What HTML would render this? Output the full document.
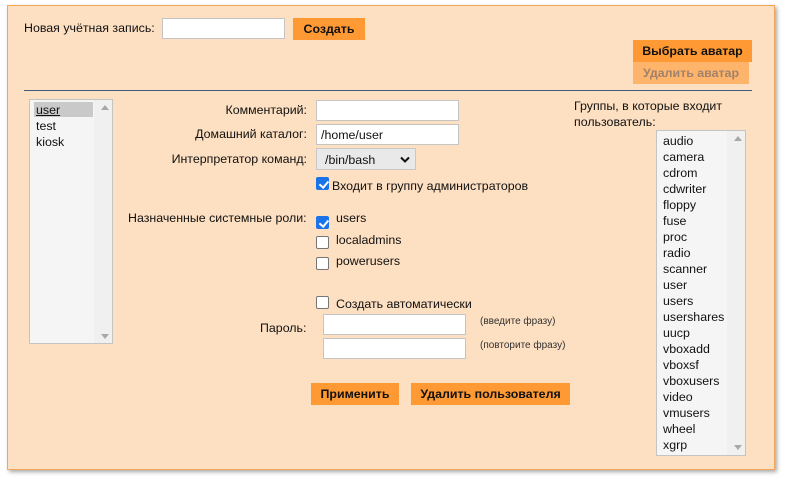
<!DOCTYPE html>
<html><head><meta charset="utf-8"><style>
*{margin:0;padding:0;box-sizing:border-box}
body{width:787px;height:484px;background:#fff;font-family:"Liberation Sans",sans-serif;font-size:12.4px;color:#111;position:relative;overflow:hidden}
.a{position:absolute;white-space:nowrap}
#panel{position:absolute;left:7px;top:5px;width:768px;height:465px;background:#fddfc1;border:1px solid #f3a658;box-shadow:2px 2px 4px rgba(0,0,0,.35)}
.in{position:absolute;background:#fff;border:1px solid #c4c4c4}
.btn{position:absolute;background:#ff9933;font-weight:bold;font-size:12.4px;text-align:center;color:#111}
.cb{position:absolute;width:13px;height:13px;border:1px solid #767676;border-radius:2px;background:#fff}
.cb.on{background:#1a73e8;border-color:#1a73e8}
.cb.on:after{content:"";position:absolute;left:3.5px;top:0.5px;width:3.5px;height:7px;border:solid #fff;border-width:0 2px 2px 0;transform:rotate(40deg)}
.lst{position:absolute;background:#f5f5f5;border:1px solid #c4c4c4}
.lst .sb{position:absolute;right:0;top:0;bottom:0;width:18px;background:#f0f0f0}
.up{position:absolute;width:0;height:0;border-left:4px solid transparent;border-right:4px solid transparent;border-bottom:5px solid #a8a8a8}
.dn{position:absolute;width:0;height:0;border-left:4px solid transparent;border-right:4px solid transparent;border-top:5px solid #a8a8a8}
.r{text-align:right}
</style></head><body>
<div id="panel"></div>
<div class="a" style="left:24px;top:21px">Новая учётная запись:</div>
<div class="in" style="left:162px;top:18px;width:123px;height:21px"></div>
<div class="btn" style="left:293px;top:18px;width:72px;height:22px;line-height:22px">Создать</div>
<div class="btn" style="left:633px;top:40px;width:119px;height:22px;line-height:22px">Выбрать аватар</div>
<div class="btn" style="left:633px;top:62px;width:116px;height:22px;line-height:22px;background:#ffb46c;color:#a0826a">Удалить аватар</div>
<div class="a" style="left:24px;top:90px;width:728px;height:1px;background:#3d5c78"></div>

<div class="lst" style="left:29px;top:99px;width:84px;height:245px"><div class="sb"></div><div class="up" style="left:71px;top:5px"></div><div class="dn" style="left:71px;top:234px"></div></div>
<div class="a" style="left:34px;top:102px;width:59px;height:15px;background:#c9c9c9"></div>
<div class="a" style="left:36px;top:103px;text-decoration:underline">user</div>
<div class="a" style="left:36px;top:119px">test</div>
<div class="a" style="left:36px;top:135px">kiosk</div>

<div class="a r" style="left:100px;width:207px;top:103px">Комментарий:</div>
<div class="in" style="left:316px;top:100px;width:143px;height:21px"></div>
<div class="a r" style="left:100px;width:207px;top:127px">Домашний каталог:</div>
<div class="in" style="left:316px;top:124px;width:143px;height:21px;padding:3px 0 0 4px">/home/user</div>
<div class="a r" style="left:100px;width:207px;top:152px">Интерпретатор команд:</div>
<div class="a" style="left:316px;top:148px;width:100px;height:22px;background:#e9e9e9;border:1px solid #c8c8c8;padding:4px 0 0 8px">/bin/bash
<svg style="position:absolute;right:5px;top:7px" width="10" height="7" viewBox="0 0 10 7"><path d="M1 1.5L5 5.5L9 1.5" stroke="#111" stroke-width="2" fill="none"/></svg></div>
<div class="cb on" style="left:316px;top:177px"></div>
<div class="a" style="left:332px;top:179px">Входит в группу администраторов</div>

<div class="a" style="left:128px;top:211px">Назначенные системные роли:</div>
<div class="cb on" style="left:316px;top:216px"></div><div class="a" style="left:336px;top:211px">users</div>
<div class="cb" style="left:316px;top:236px"></div><div class="a" style="left:336px;top:233px">localadmins</div>
<div class="cb" style="left:316px;top:257px"></div><div class="a" style="left:336px;top:254px">powerusers</div>

<div class="cb" style="left:316px;top:296px"></div><div class="a" style="left:336px;top:297px">Создать автоматически</div>
<div class="a" style="left:260px;top:321px">Пароль:</div>
<div class="in" style="left:323px;top:314px;width:143px;height:21px"></div>
<div class="in" style="left:323px;top:338px;width:143px;height:21px"></div>
<div class="a" style="left:480px;top:316px;font-size:10px;color:#333">(введите фразу)</div>
<div class="a" style="left:480px;top:340px;font-size:10px;color:#333">(повторите фразу)</div>

<div class="btn" style="left:311px;top:383px;width:88px;height:22px;line-height:22px">Применить</div>
<div class="btn" style="left:411px;top:383px;width:159px;height:22px;line-height:22px">Удалить пользователя</div>

<div class="a" style="left:574px;top:98px;line-height:16px">Группы, в которые входит<br>пользователь:</div>
<div class="lst" style="left:656px;top:130px;width:90px;height:326px"><div class="sb"></div><div class="up" style="left:77px;top:5px"></div><div class="dn" style="left:77px;top:314px"></div></div>
<div class="a" style="left:663px;top:133px;line-height:16px">audio<br>camera<br>cdrom<br>cdwriter<br>floppy<br>fuse<br>proc<br>radio<br>scanner<br>user<br>users<br>usershares<br>uucp<br>vboxadd<br>vboxsf<br>vboxusers<br>video<br>vmusers<br>wheel<br>xgrp</div>
</body></html>
